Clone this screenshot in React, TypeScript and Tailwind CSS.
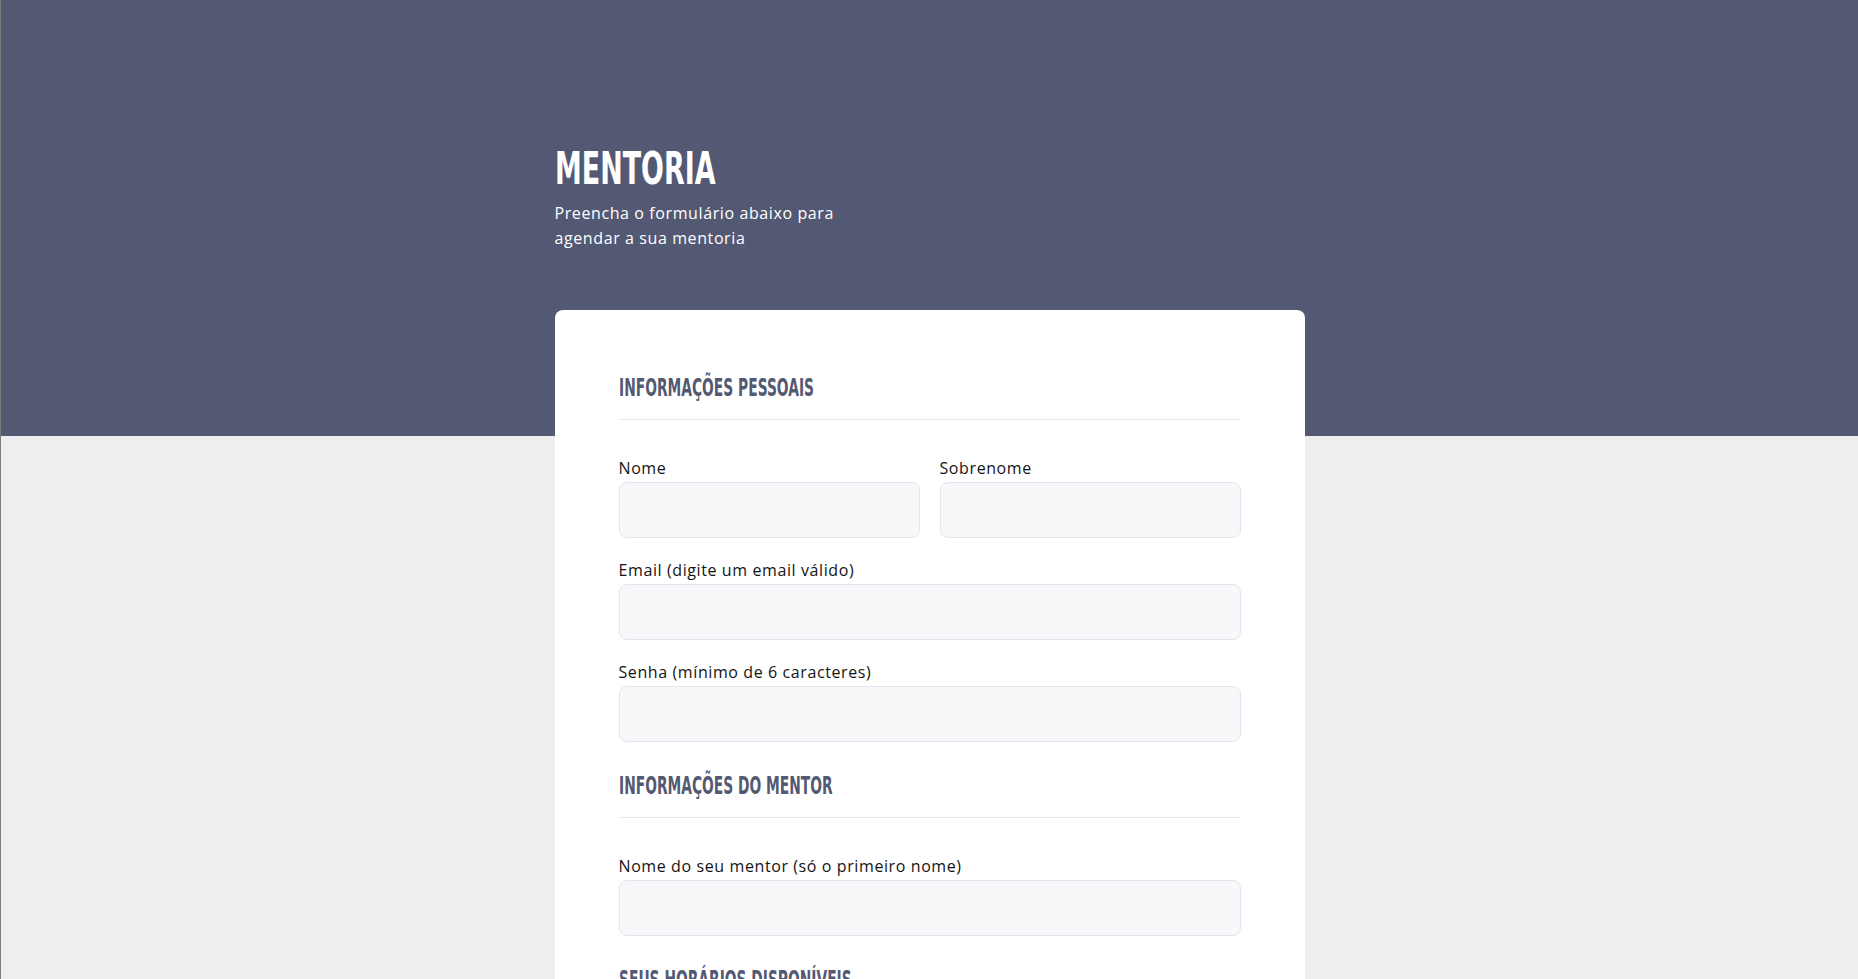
import React from "react";

const headingFont = {
  fontFamily: '"Liberation Sans Narrow", "DejaVu Sans Condensed", "Roboto Condensed", "Liberation Sans", sans-serif',
};

const Field: React.FC<{ label: string; type?: string }> = ({ label, type = "text" }) => (
  <div className="mb-5">
    <label className="block mb-0.5 text-[16px] leading-6 tracking-[0.6px] text-[#141414]">{label}</label>
    <input
      type={type}
      className="block w-full h-14 px-4 rounded-lg bg-[#f8f8fb] border border-[#e4e4ef] outline-none"
    />
  </div>
);

// margins collapse with the field's mb-5, so 30px here gives ~10px extra
const SectionTitle: React.FC<{ title: string; first?: boolean }> = ({ title, first }) => (
  <div className={`${first ? "" : "mt-[30px]"} pb-4 mb-9 border-b border-[#e6e6ee]`}>
    <h2
      className="inline-block origin-left scale-x-[0.64] text-[24px] leading-[29px] font-bold text-[#545973] whitespace-nowrap"
      style={headingFont}
    >
      {title}
    </h2>
  </div>
);

const App: React.FC = () => {
  return (
    <div
      className="min-h-screen bg-[#eeeeee] border-l border-[#7d7d7d]"
      style={{ fontFamily: '"Open Sans", "Noto Sans", sans-serif' }}
    >
      <header className="h-[436px] bg-[#545973]">
        <div className="w-[750px] mx-auto pt-[147px]">
          <h1
            className="inline-block origin-left scale-x-[0.68] text-[44px] leading-[44px] font-bold text-white"
            style={headingFont}
          >
            MENTORIA
          </h1>
          <p className="mt-[10px] max-w-[310px] text-[16px] leading-[25px] tracking-[0.6px] text-white">
            Preencha o formulário abaixo para agendar a sua mentoria
          </p>
        </div>
      </header>

      <main className="w-[750px] mx-auto -mt-[126px] pb-16">
        <form className="bg-white rounded-lg px-16 pt-16 pb-12">
          <SectionTitle title="INFORMAÇÕES PESSOAIS" first />
          <div className="grid grid-cols-2 gap-x-5">
            <Field label="Nome" />
            <Field label="Sobrenome" />
          </div>
          <Field label="Email (digite um email válido)" type="email" />
          <Field label="Senha (mínimo de 6 caracteres)" type="password" />

          <SectionTitle title="INFORMAÇÕES DO MENTOR" />
          <Field label="Nome do seu mentor (só o primeiro nome)" />

          <SectionTitle title="SEUS HORÁRIOS DISPONÍVEIS" />
          <div className="grid grid-cols-2 gap-x-5">
            <Field label="Dia da semana" />
            <Field label="Horário" />
          </div>

          <button
            type="submit"
            className="mt-4 w-full h-14 rounded-lg bg-[#545973] text-white font-semibold"
          >
            Agendar mentoria
          </button>
        </form>
      </main>
    </div>
  );
};

export default App;
